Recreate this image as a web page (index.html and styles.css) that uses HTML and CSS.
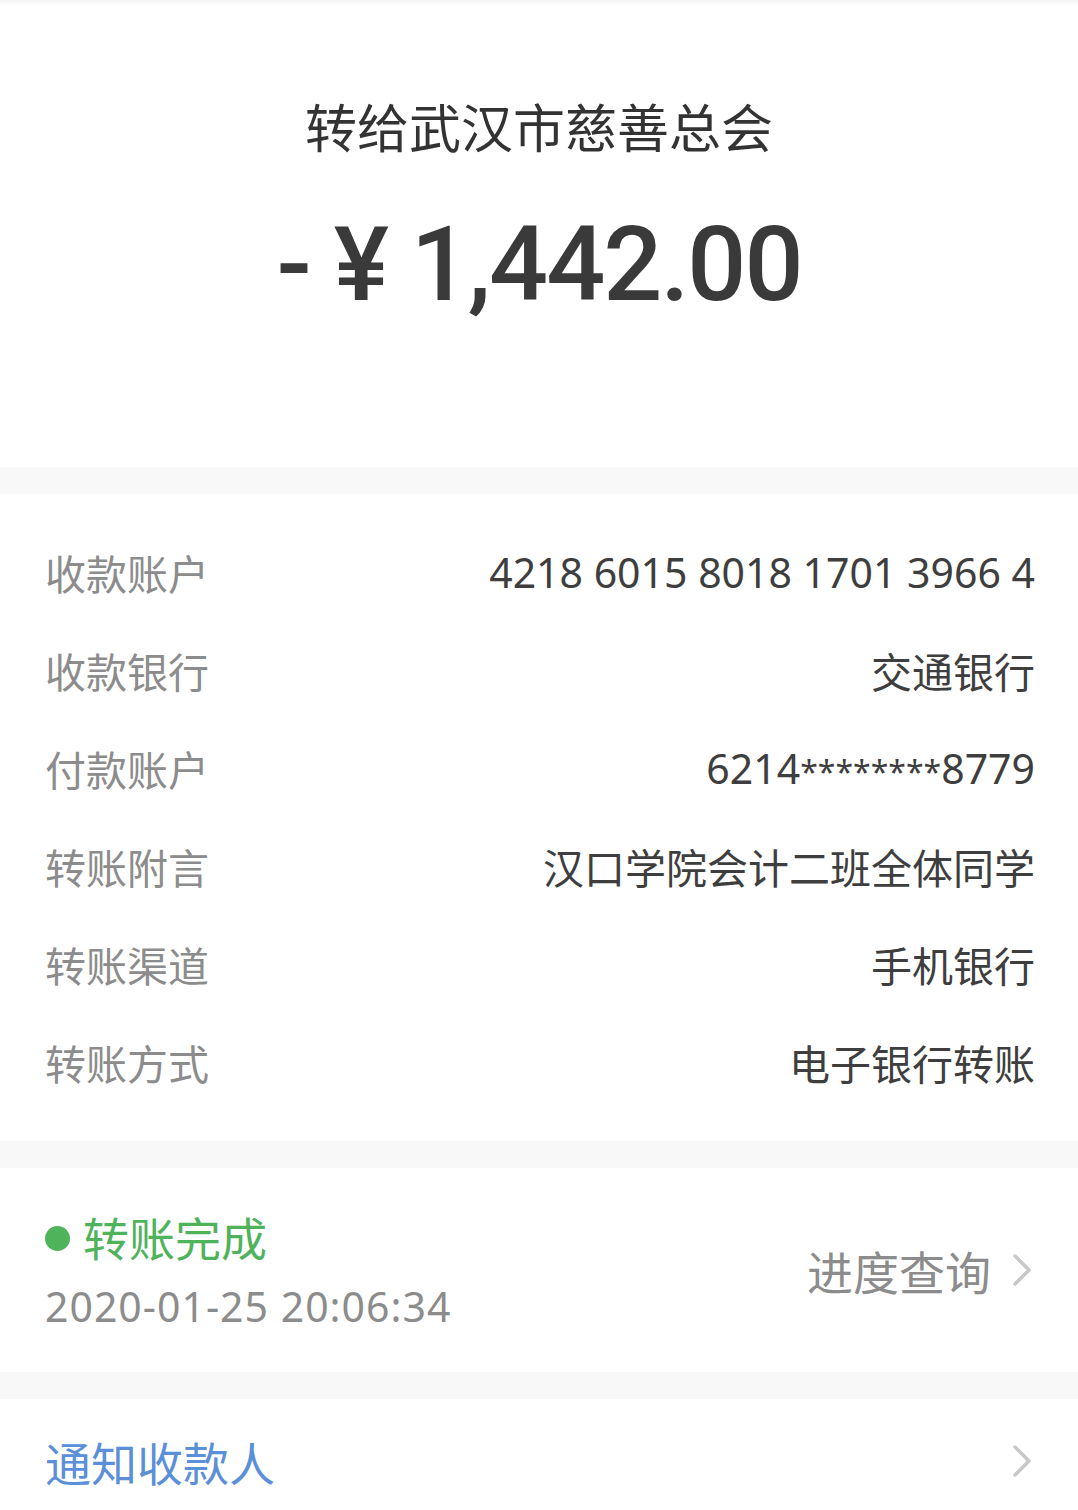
FILE: index.html
```html
<!DOCTYPE html>
<html lang="zh-CN">
<head>
    <meta charset="UTF-8">
    <meta name="viewport" content="width=device-width, initial-scale=1.0">
    <title>转账详情</title>
    <link rel="stylesheet" href="styles.css">
</head>
<body>
    <div class="top-edge"></div>

    <section class="summary">
        <h1 class="payee">转给武汉市慈善总会</h1>
        <div class="amount">- ¥ 1,442.00</div>
    </section>

    <div class="band"></div>

    <section class="details">
        <div class="row">
            <span class="label">收款账户</span>
            <span class="value">4218 6015 8018 1701 3966 4</span>
        </div>
        <div class="row">
            <span class="label">收款银行</span>
            <span class="value">交通银行</span>
        </div>
        <div class="row">
            <span class="label">付款账户</span>
            <span class="value">6214<span class="mask">********</span>8779</span>
        </div>
        <div class="row">
            <span class="label">转账附言</span>
            <span class="value">汉口学院会计二班全体同学</span>
        </div>
        <div class="row">
            <span class="label">转账渠道</span>
            <span class="value">手机银行</span>
        </div>
        <div class="row">
            <span class="label">转账方式</span>
            <span class="value">电子银行转账</span>
        </div>
    </section>

    <div class="band"></div>

    <section class="status">
        <div class="status-info">
            <div class="status-line"><span class="dot"></span>转账完成</div>
            <div class="status-time">2020-01-25 20:06:34</div>
        </div>
        <a class="link-gray" href="#">
            进度查询
            <svg class="chevron" width="18" height="32" viewBox="0 0 18 32">
                <polyline points="2,2 16,16 2,30" fill="none" stroke="#c8c8c8" stroke-width="3.5" stroke-linecap="round" stroke-linejoin="round"/>
            </svg>
        </a>
    </section>

    <div class="band"></div>

    <section class="notify">
        <a class="link-blue" href="#">通知收款人</a>
        <svg class="chevron" width="18" height="32" viewBox="0 0 18 32">
            <polyline points="2,2 16,16 2,30" fill="none" stroke="#c8c8c8" stroke-width="3.5" stroke-linecap="round" stroke-linejoin="round"/>
        </svg>
    </section>
</body>
</html>
```

FILE: styles.css
```css
body {
    margin: 0;
    background: #fff;
    font-family: "Noto Sans", "Noto Sans CJK SC", sans-serif;
    color: #333;
}
a {
    text-decoration: none;
}
.top-edge {
    height: 6px;
    background: linear-gradient(#f3f3f3, #fff);
}
.summary {
    height: 461px;
    display: flex;
    flex-direction: column;
    align-items: center;
}
.payee {
    margin: 92px 0 0;
    font-size: 52px;
    font-weight: normal;
    line-height: 60px;
    color: #333;
}
.amount {
    margin-top: 47px;
    font-family: Roboto, "Liberation Sans", sans-serif;
    font-weight: 500;
    font-size: 104px;
    line-height: 120px;
    letter-spacing: -2px;
    color: #3a3a3a;
}
.band {
    height: 27px;
    background: #f8f8f8;
}
.details {
    padding: 29px 43px 30px 45px;
}
.row {
    height: 98px;
    display: flex;
    justify-content: space-between;
    align-items: center;
    font-size: 41px;
}
.label {
    color: #8c8c8c;
}
.value {
    color: #3e3e3e;
}
.mask {
    font-size: 32px;
}
.status {
    height: 204px;
    padding: 0 47px 0 45px;
    display: flex;
    justify-content: space-between;
    align-items: center;
}
.status-info {
    line-height: 68px;
    margin-top: 4px;
}
.status-line {
    display: flex;
    align-items: center;
    font-size: 46px;
    color: #4fb35c;
}
.dot {
    width: 25px;
    height: 25px;
    border-radius: 50%;
    background: #4fb35c;
    margin-right: 13px;
}
.status-time {
    font-size: 41px;
    color: #8c8c8c;
    letter-spacing: 1px;
}
.link-gray {
    display: flex;
    align-items: center;
    gap: 22px;
    font-size: 46px;
    color: #8c8c8c;
}
.notify {
    height: 124px;
    padding: 0 47px 0 45px;
    display: flex;
    justify-content: space-between;
    align-items: center;
}
.link-blue {
    font-size: 46px;
    color: #5b8fd8;
}
.chevron {
    display: block;
}
```
